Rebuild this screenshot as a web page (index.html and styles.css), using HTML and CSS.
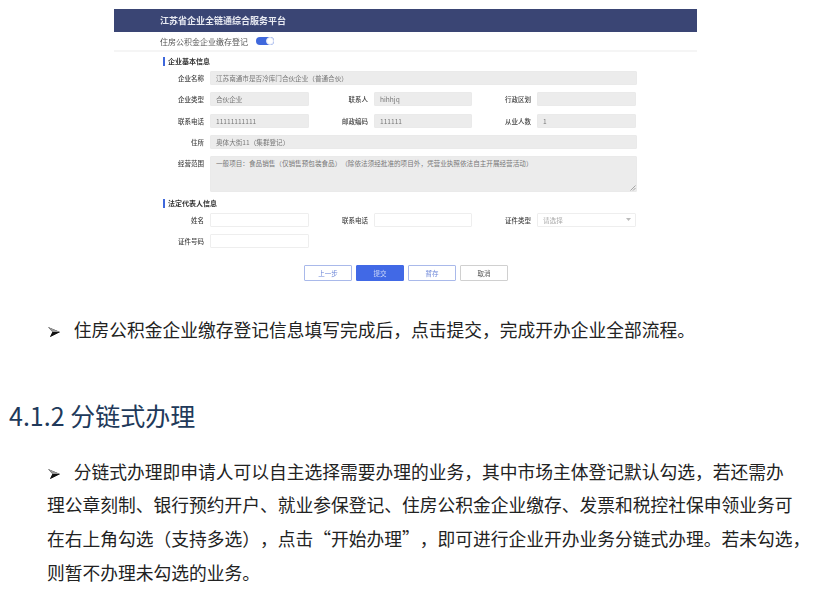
FILE: index.html
```html
<!DOCTYPE html>
<html lang="zh-CN">
<head>
<meta charset="utf-8">
<title>分链式办理</title>
<link rel="stylesheet" href="styles.css">
</head>
<body>
<main class="doc">
  <figure class="shot">
    <header class="shot-title">江苏省企业全链通综合服务平台</header>
    <div class="tabbar">
      <span>住房公积金企业缴存登记</span>
      <span class="toggle"><i></i></span>
    </div>
    <h3 class="sec sec-a">企业基本信息</h3>
    <div class="grid grid-a">
      <label>企业名称</label><div class="f ro wide">江苏南通市是否冷库门合伙企业（普通合伙）</div>
      <label>企业类型</label><div class="f ro">合伙企业</div>
      <label>联系人</label><div class="f ro">hihhjq</div>
      <label>行政区划</label><div class="f ro"></div>
      <label>联系电话</label><div class="f ro">11111111111</div>
      <label>邮政编码</label><div class="f ro">111111</div>
      <label>从业人数</label><div class="f ro">1</div>
      <label>住所</label><div class="f ro wide">奥体大街11（集群登记）</div>
      <label class="top">经营范围</label>
      <div class="f ro wide area">一般项目：食品销售（仅销售预包装食品）（除依法须经批准的项目外，凭营业执照依法自主开展经营活动）
        <svg class="grip" width="6" height="6" viewBox="0 0 6 6"><path d="M0.5 5.5 5.5 0.5M3 5.5 5.5 3" stroke="#888" stroke-width="0.7" fill="none"/></svg>
      </div>
    </div>
    <h3 class="sec sec-b">法定代表人信息</h3>
    <div class="grid grid-b">
      <label>姓名</label><div class="f"></div>
      <label>联系电话</label><div class="f"></div>
      <label>证件类型</label>
      <div class="f select"><span>请选择</span><svg width="5" height="3" viewBox="0 0 5 3"><path d="M0 0h5L2.5 3z" fill="#bbb"/></svg></div>
      <label>证件号码</label><div class="f"></div>
    </div>
    <div class="actions">
      <button class="btn ghost">上一步</button>
      <button class="btn primary">提交</button>
      <button class="btn ghost">暂存</button>
      <button class="btn plain">取消</button>
    </div>
  </figure>
  <p class="para first"><span class="arrow"><svg width="14" height="12" viewBox="0 0 14 12"><path d="M1 1 13 6 3 11 5.5 6z" fill="#111"/><path d="M1 1 13 6 5.5 6z" fill="#999"/><path d="M3 11 13 6 5.5 6z" fill="#111"/></svg></span>住房公积金企业缴存登记信息填写完成后，点击提交，完成开办企业全部流程。</p>
  <h2 class="heading">4.1.2 分链式办理</h2>
  <p class="para body"><span class="arrow"><svg width="14" height="12" viewBox="0 0 14 12"><path d="M1 1 13 6 3 11 5.5 6z" fill="#111"/><path d="M1 1 13 6 5.5 6z" fill="#999"/><path d="M3 11 13 6 5.5 6z" fill="#111"/></svg></span>分链式办理即申请人可以自主选择需要办理的业务，其中市场主体登记默认勾选，若还需办<br>理公章刻制、银行预约开户、就业参保登记、住房公积金企业缴存、发票和税控社保申领业务可<br>在右上角勾选（支持多选），点击“开始办理”，即可进行企业开办业务分链式办理。若未勾选，<br>则暂不办理未勾选的业务。</p>
</main>
</body>
</html>
```
FILE: styles.css
```css
* { box-sizing: border-box; }
html, body { margin: 0; padding: 0; background: #fff; }
body {
  width: 827px;
  height: 594px;
  overflow: hidden;
  font-family: "Noto Sans CJK SC", "Noto Sans", sans-serif;
  text-spacing-trim: space-all;
}
.doc { padding-top: 9px; }

.shot {
  width: 583px;
  height: 278px;
  margin: 0 0 0 114px;
  filter: blur(0.35px);
  color: #666;
}
.shot-title {
  height: 23px;
  padding-left: 46px;
  background: #3a4574;
  color: #e8eaf2;
  font-size: 9px;
  font-weight: 700;
  line-height: 23px;
}
.tabbar {
  display: flex;
  align-items: center;
  gap: 8px;
  height: 20px;
  padding-left: 46px;
  border-bottom: 2px solid #f5f5f5;
  font-size: 8px;
  color: #555;
}
.toggle {
  position: relative;
  width: 18px;
  height: 8px;
  border-radius: 4px;
  background: #3f68dc;
}
.toggle i {
  position: absolute;
  right: 0;
  top: 0;
  width: 8px;
  height: 8px;
  border-radius: 50%;
  background: #fff;
  border: 1px solid #dfe5f7;
}
.sec {
  margin: 0 0 0 49px;
  height: 9px;
  border-left: 2px solid #3f68dc;
  padding-left: 3px;
  font-size: 7px;
  font-weight: 700;
  line-height: 9px;
  color: #333;
}
.sec-a { margin-top: 5px; }
.sec-b { margin-top: 7px; }

.grid {
  display: grid;
  grid-template-columns: 96px 99px 65px 98px 65px 99px;
  align-items: center;
}
.grid-a {
  margin-top: 5px;
  grid-template-rows: 14px 14px 14px 14px 36px;
  row-gap: 7.3px;
}
.grid-b { margin-top: 4.5px; grid-auto-rows: 14px; row-gap: 7.5px; }
.grid label {
  padding-right: 6px;
  text-align: right;
  font-size: 6.5px;
  font-weight: 500;
  line-height: 14px;
  color: #444;
}
.grid label.top { align-self: start; }
.f {
  height: 14px;
  padding-left: 5px;
  border-radius: 1px;
  font-size: 6.6px;
  line-height: 14px;
  color: #777;
  border: 1px solid #eee;
  background: #fff;
}
.f.ro { background: #ececec; border-color: #eaeaea; line-height: 12px; }
.wide { grid-column: 2 / -1; width: 427px; }
.area {
  position: relative;
  align-self: start;
  height: 36px;
  white-space: nowrap;
}
.grip { position: absolute; right: 0; bottom: 0; }
.select {
  display: flex;
  align-items: center;
  justify-content: space-between;
  padding-right: 4px;
  color: #aaa;
}

.actions {
  display: flex;
  gap: 4px;
  margin: 17px 0 0 190px;
}
.btn {
  width: 48px;
  height: 16px;
  padding: 0;
  border-radius: 1px;
  font: 400 6.5px/14px "Noto Sans CJK SC", sans-serif;
  background: #fff;
}
.ghost { border: 1px solid #a9b9ea; color: #6c86d8; }
.primary { background: #4169e6; border: 1px solid #4169e6; color: #cdd8f8; }
.plain { border: 1px solid #d0d0d0; color: #555; }

.para {
  margin: 0 0 0 47px;
  font-size: 17.75px;
  line-height: 33.7px;
  color: #222;
  white-space: nowrap;
}
.arrow {
  display: inline-block;
  width: 26.7px;
}
.arrow svg { display: inline-block; vertical-align: -1px; }
.first { margin-top: 26px; }
.heading {
  margin: 50px 0 0 9px;
  font-size: 25px;
  font-weight: 400;
  line-height: 36px;
  color: #21395a;
}
.body { margin-top: 22px; }
```
